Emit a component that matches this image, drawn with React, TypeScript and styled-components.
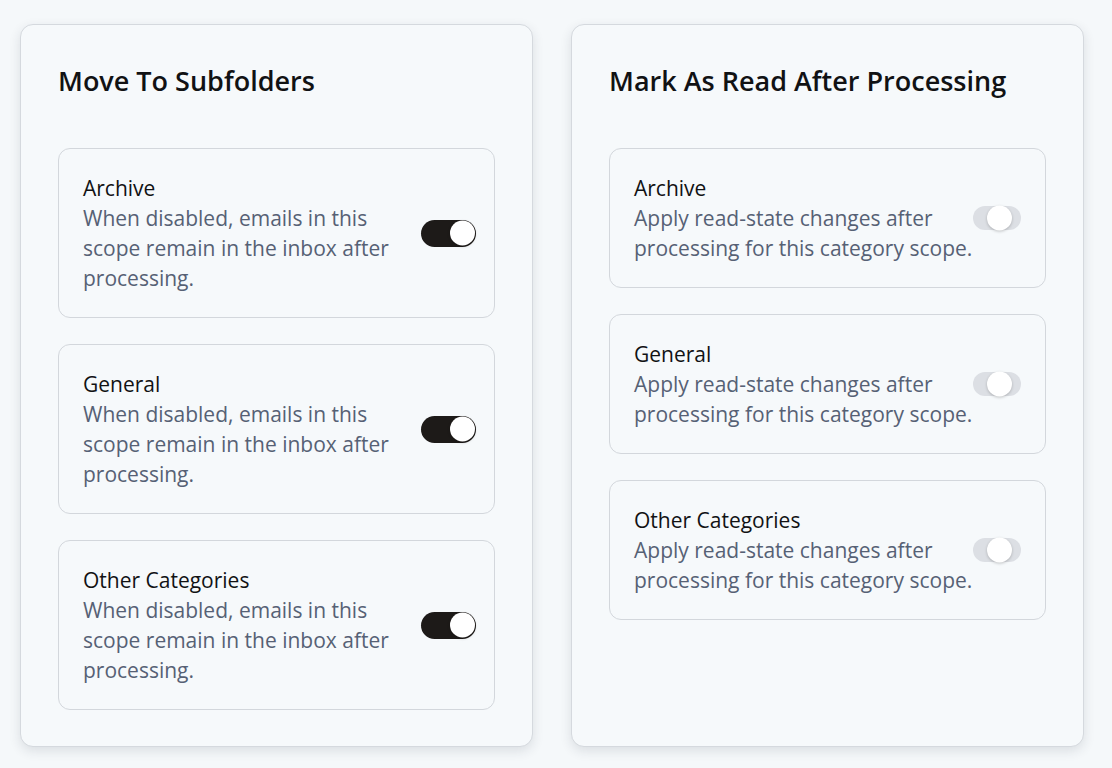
import React from "react";
import styled, { createGlobalStyle } from "styled-components";

const Global = createGlobalStyle`
  html, body { margin: 0; padding: 0; background: #f5f8fa; }
  body { font-family: "Open Sans", "Noto Sans", sans-serif; }
  * { box-sizing: border-box; }
`;

const Page = styled.div`
  display: grid;
  grid-template-columns: 1fr 1fr;
  column-gap: 38px;
  padding: 24px 28px 22px 20px;
  align-items: stretch;
`;

const Card = styled.section`
  background: #f6f9fb;
  border: 1px solid #d5d9de;
  border-radius: 13px;
  box-shadow: 0 4px 12px rgba(30, 40, 60, 0.12);
  padding: 38px 37px 36px 37px;
  display: flex;
  flex-direction: column;
`;

const Title = styled.h2`
  margin: 0 0 49px 0;
  font-size: 27px;
  line-height: 36px;
  font-weight: 600;
  color: #111214;
  letter-spacing: 0;
`;

const List = styled.div`
  display: flex;
  flex-direction: column;
  gap: 26px;
`;

const Item = styled.div<{ $padRight: number; $gap: number }>`
  border: 1px solid #d3d7dc;
  border-radius: 12px;
  padding: 24px ${(p) => p.$padRight}px 24px 24px;
  display: flex;
  align-items: center;
  gap: ${(p) => p.$gap}px;
`;

const Text = styled.div`
  flex: 1;
  min-width: 0;
`;

const ItemTitle = styled.div`
  font-size: 21px;
  line-height: 30px;
  color: #111214;
`;

const Desc = styled.div`
  font-size: 21px;
  line-height: 30px;
  color: #566175;
`;

const Track = styled.div<{ $on: boolean }>`
  flex: none;
  position: relative;
  width: ${(p) => (p.$on ? 55 : 48)}px;
  height: ${(p) => (p.$on ? 27 : 24)}px;
  border-radius: 999px;
  background: ${(p) => (p.$on ? "#1d1a18" : "#dcdfe4")};
`;

const Knob = styled.div<{ $on: boolean }>`
  position: absolute;
  top: 50%;
  transform: translateY(-50%);
  width: 25px;
  height: 25px;
  border-radius: 50%;
  background: #ffffff;
  box-shadow: 0 1px 3px rgba(0, 0, 0, 0.22);
  ${(p) => (p.$on ? "right: 1px;" : "left: 14px;")}
`;

const Toggle = ({ on }: { on: boolean }) => (
  <Track $on={on}>
    <Knob $on={on} />
  </Track>
);

const left = ["Archive", "General", "Other Categories"];

export default function App() {
  return (
    <>
      <Global />
      <Page>
        <Card>
          <Title>Move To Subfolders</Title>
          <List>
            {left.map((t) => (
              <Item key={t} $padRight={18} $gap={16}>
                <Text>
                  <ItemTitle>{t}</ItemTitle>
                  <Desc>
                    When disabled, emails in this scope remain in the inbox after
                    processing.
                  </Desc>
                </Text>
                <Toggle on />
              </Item>
            ))}
          </List>
        </Card>
        <Card>
          <Title>Mark As Read After Processing</Title>
          <List>
            {left.map((t) => (
              <Item key={t} $padRight={24} $gap={0}>
                <Text>
                  <ItemTitle>{t}</ItemTitle>
                  <Desc>
                    Apply read-state changes after processing for this category
                    scope.
                  </Desc>
                </Text>
                <Toggle on={false} />
              </Item>
            ))}
          </List>
        </Card>
      </Page>
    </>
  );
}
